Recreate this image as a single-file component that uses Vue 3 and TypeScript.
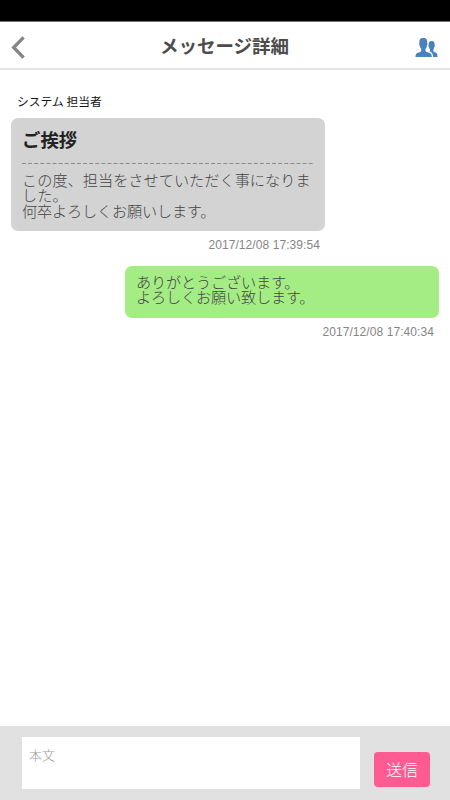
<script setup lang="ts">
import { ref } from 'vue'

interface Message {
  id: number
  mine: boolean
  sender?: string
  title?: string
  lines: string[]
  sentAt: string
}

const messages: Message[] = [
  {
    id: 1,
    mine: false,
    sender: 'システム 担当者',
    title: 'ご挨拶',
    lines: ['この度、担当をさせていただく事になりました。', '何卒よろしくお願いします。'],
    sentAt: '2017/12/08 17:39:54',
  },
  {
    id: 2,
    mine: true,
    lines: ['ありがとうございます。', 'よろしくお願い致します。'],
    sentAt: '2017/12/08 17:40:34',
  },
]

const draft = ref('')
</script>

<template>
  <div class="screen">
    <div class="status-bar"></div>
    <header class="header">
      <button class="icon-button back" type="button">
        <svg width="14" height="23" viewBox="0 0 14 23">
          <path d="M12.6 1.4 2.7 11.5l9.9 10.1" fill="none" stroke="#858585" stroke-width="3.4" />
        </svg>
      </button>
      <h1 class="title">メッセージ詳細</h1>
      <button class="icon-button members" type="button">
        <svg width="23" height="20" viewBox="0 0 23 20" fill="#4a82be">
          <path d="M16.6 3C18.6 3 19.8 4 19.6 6.8C20 7.2 19.900 8.700 19.300 9.100C19.100 10.300 18.800 10.900 18.400 11.400V13.200C18.900 14 20.500 14.200 21.500 14.900C22.300 15.600 22.500 17.200 22.500 19H18.100C17.900 16.400 17.400 14.900 15.900 14.100L14.500 13.400L15 12.800V11.400C14.500 10.900 14.200 10.300 14 9.100C13.300 8.700 13.200 7.200 13.700 6.800C13.400 4 14.700 3 16.600 3Z" />
          <path d="M8.300 0C11.300 0 12.500 1.300 12.100 5C12.700 5.300 12.600 7.400 11.800 7.900C11.600 9.300 11.100 10.100 10.500 10.700V12.900C11 14 13.100 14.200 14.800 15C16.300 15.800 16.700 17.300 16.800 19H.5C.5 17.300.8 15.900 2.200 15C3.900 14.200 5.700 14 6.200 12.900V10.700C5.500 10.100 5.100 9.300 4.900 7.900C4 7.400 3.900 5.300 4.500 5C4.100 1.300 5.400 0 8.300 0Z" />
        </svg>
      </button>
    </header>

    <main class="thread">
      <article v-for="m in messages" :key="m.id" class="message" :class="{ mine: m.mine }">
        <p v-if="m.sender" class="sender">{{ m.sender }}</p>
        <div class="bubble">
          <h2 v-if="m.title" class="subject">{{ m.title }}</h2>
          <svg v-if="m.title" class="rule" width="292" height="1" viewBox="0 0 292 1">
            <path d="M0 .5h292" stroke="#8c8c8c" stroke-dasharray="4 2.1" />
          </svg>
          <p v-for="line in m.lines" :key="line" class="line">{{ line }}</p>
        </div>
        <time class="time">{{ m.sentAt }}</time>
      </article>
    </main>

    <footer class="composer">
      <textarea v-model="draft" class="input" placeholder="本文"></textarea>
      <button class="send" type="button">送信</button>
    </footer>
  </div>
</template>

<style>
body {
  margin: 0;
  background: #fff;
}
</style>

<style scoped>
.screen {
  display: flex;
  flex-direction: column;
  width: 450px;
  height: 800px;
  overflow: hidden;
  background: #fff;
  font-family: "Liberation Sans", "Noto Sans CJK JP", sans-serif;
}
.screen * {
  box-sizing: border-box;
}
h1, h2, p {
  margin: 0;
}
.status-bar {
  flex: none;
  height: 22px;
  background: #000;
  border-bottom: 1px solid #777;
}
.header {
  flex: none;
  display: flex;
  align-items: center;
  justify-content: space-between;
  height: 48px;
  padding: 0 12px 0 11px;
  border-bottom: 2px solid #e5e5e5;
}
.icon-button {
  display: flex;
  width: 23px;
  padding: 0;
  border: 0;
  background: none;
}
.back {
  padding-top: 4px;
}
.members {
  padding-top: 5px;
}
.title {
  font-family: "Noto Sans CJK JP", sans-serif;
  font-size: 18.5px;
  line-height: 28px;
  font-weight: 700;
  color: #4c4c4c;
}
.thread {
  flex: 1;
  padding: 22px 11px 0;
}
.message {
  display: flex;
  flex-direction: column;
  width: 314px;
}
.mine {
  margin: 14px 0 0 auto;
}
.sender {
  padding-left: 6px;
  font-family: "Noto Sans CJK JP", sans-serif;
  font-size: 11.8px;
  line-height: 18px;
  height: 26px;
  color: #111;
}
.bubble {
  padding: 11px 10px 11px 11px;
  border-radius: 7px;
  background: #d3d3d3;
  color: #444;
  min-height: 113px;
}
.mine .bubble {
  min-height: 52px;
  padding-top: 8px;
  background: #a4ec84;
}
.subject {
  height: 34px;
  font-size: 18.4px;
  line-height: 23px;
  font-weight: 700;
  color: #222;
}
.rule {
  display: block;
  margin-bottom: 8px;
}
.line {
  font-family: "Noto Sans CJK JP", sans-serif;
  font-size: 15.2px;
  line-height: 15.3px;
  font-weight: 300;
  word-break: break-all;
}
.line + .line,
.mine .line {
  letter-spacing: -0.2px;
}
.time {
  padding: 7px 5px 0 0;
  text-align: right;
  font-size: 12px;
  letter-spacing: 0.08px;
  line-height: 14px;
  color: #858585;
}
.composer {
  flex: none;
  display: flex;
  align-items: flex-start;
  gap: 14px;
  height: 74px;
  padding: 11px 19px 0 22px;
  background: #e1e1e1;
}
.input {
  width: 338px;
  height: 52px;
  padding: 8px 7px;
  border: 0;
  outline: 0;
  resize: none;
  background: #fff;
  font-family: "Noto Sans CJK JP", sans-serif;
  font-size: 13px;
  line-height: 20px;
  font-weight: 300;
}
.input::placeholder {
  color: #999;
}
.send {
  width: 56px;
  height: 35px;
  margin-top: 15px;
  padding: 0 0 2px;
  border: 0;
  border-radius: 4px;
  background: #ff5b93;
  color: #fff;
  font-family: "Noto Sans CJK JP", sans-serif;
  font-size: 16px;
  font-weight: 300;
  line-height: 32px;
}
</style>
